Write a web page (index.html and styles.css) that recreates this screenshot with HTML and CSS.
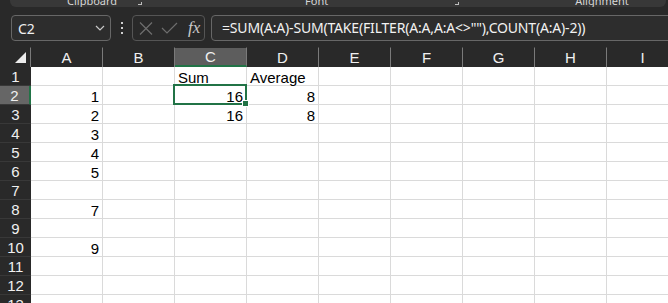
FILE: index.html
```html
<!DOCTYPE html>
<html lang="en">
<head>
  <meta charset="UTF-8">
  <meta name="viewport" content="width=device-width, initial-scale=1.0">
  <title>Sheet1 - Excel</title>
  <link rel="stylesheet" href="styles.css">
</head>
<body>
  <!-- bottom edge of the ribbon, group names cut off -->
  <div class="ribbon">
    <span class="group-label clipboard">Clipboard</span>
    <span class="launcher l1"></span>
    <span class="group-label font">Font</span>
    <span class="launcher l2"></span>
    <span class="group-label alignment">Alignment</span>
  </div>

  <div class="formula-row">
    <div class="name-box">
      <span>C2</span>
      <svg class="chevron" width="10" height="6" viewBox="0 0 10 6"><path d="M1 1l4 4 4-4" fill="none" stroke="#c8c8c8" stroke-width="1.2"/></svg>
    </div>
    <div class="grip"><i></i><i></i><i></i></div>
    <div class="fx-box">
      <svg width="14" height="13" viewBox="0 0 14 13"><path d="M1 0.5l12 12M13 0.5l-12 12" stroke="#6e6e6e" stroke-width="1.2"/></svg>
      <svg width="17" height="12" viewBox="0 0 17 12"><path d="M1 6l5 5L16 1" fill="none" stroke="#6e6e6e" stroke-width="1.2"/></svg>
      <span class="fx">fx</span>
    </div>
    <div class="formula-input">=SUM(A:A)-SUM(TAKE(FILTER(A:A,A:A&lt;&gt;""),COUNT(A:A)-2))</div>
  </div>

  <div class="sheet">
    <div class="h corner"><span class="tri"></span></div><div class="h">A</div><div class="h">B</div><div class="h sel">C</div><div class="h">D</div><div class="h">E</div><div class="h">F</div><div class="h">G</div><div class="h">H</div><div class="h">I</div>

    <div class="r">1</div><div class="c"></div><div class="c"></div><div class="c">Sum</div><div class="c">Average</div><div class="c"></div><div class="c"></div><div class="c"></div><div class="c"></div><div class="c"></div>
    <div class="r sel">2</div><div class="c n">1</div><div class="c"></div><div class="c n active">16</div><div class="c n">8</div><div class="c"></div><div class="c"></div><div class="c"></div><div class="c"></div><div class="c"></div>
    <div class="r">3</div><div class="c n">2</div><div class="c"></div><div class="c n">16</div><div class="c n">8</div><div class="c"></div><div class="c"></div><div class="c"></div><div class="c"></div><div class="c"></div>
    <div class="r">4</div><div class="c n">3</div><div class="c"></div><div class="c"></div><div class="c"></div><div class="c"></div><div class="c"></div><div class="c"></div><div class="c"></div><div class="c"></div>
    <div class="r">5</div><div class="c n">4</div><div class="c"></div><div class="c"></div><div class="c"></div><div class="c"></div><div class="c"></div><div class="c"></div><div class="c"></div><div class="c"></div>
    <div class="r">6</div><div class="c n">5</div><div class="c"></div><div class="c"></div><div class="c"></div><div class="c"></div><div class="c"></div><div class="c"></div><div class="c"></div><div class="c"></div>
    <div class="r">7</div><div class="c"></div><div class="c"></div><div class="c"></div><div class="c"></div><div class="c"></div><div class="c"></div><div class="c"></div><div class="c"></div><div class="c"></div>
    <div class="r">8</div><div class="c n">7</div><div class="c"></div><div class="c"></div><div class="c"></div><div class="c"></div><div class="c"></div><div class="c"></div><div class="c"></div><div class="c"></div>
    <div class="r">9</div><div class="c"></div><div class="c"></div><div class="c"></div><div class="c"></div><div class="c"></div><div class="c"></div><div class="c"></div><div class="c"></div><div class="c"></div>
    <div class="r">10</div><div class="c n">9</div><div class="c"></div><div class="c"></div><div class="c"></div><div class="c"></div><div class="c"></div><div class="c"></div><div class="c"></div><div class="c"></div>
    <div class="r">11</div><div class="c"></div><div class="c"></div><div class="c"></div><div class="c"></div><div class="c"></div><div class="c"></div><div class="c"></div><div class="c"></div><div class="c"></div>
    <div class="r">12</div><div class="c"></div><div class="c"></div><div class="c"></div><div class="c"></div><div class="c"></div><div class="c"></div><div class="c"></div><div class="c"></div><div class="c"></div>
    <div class="r">13</div><div class="c"></div><div class="c"></div><div class="c"></div><div class="c"></div><div class="c"></div><div class="c"></div><div class="c"></div><div class="c"></div><div class="c"></div>
  </div>
</body>
</html>
```

FILE: styles.css
```css
body {
  margin: 0;
  background-color: #292929;
  font-family: "Liberation Sans", Arial, sans-serif;
  overflow: hidden;
  height: 303px;
}

.ribbon {
  margin-left: 10px;
  margin-right: 2px;
  height: 7px;
  background-color: #383838;
  border-radius: 0 0 6px 6px;
  display: flex;
  align-items: flex-end;
  overflow: hidden;
}

.group-label {
  font-family: "Noto Sans", sans-serif;
  font-size: 11px;
  line-height: 11px;
  color: #d6d6d6;
  margin-bottom: 1px;
}

.clipboard { margin-left: 57px; }
.font { margin-left: 163px; }
.alignment { margin-left: 116px; }

.launcher {
  width: 4px;
  height: 3px;
  margin-bottom: 2px;
  border-right: 1px solid #bdbdbd;
  border-bottom: 1px solid #bdbdbd;
  box-sizing: border-box;
}

.l1 { margin-left: 21px; }
.l2 { margin-left: 127px; }

.formula-row {
  display: flex;
  align-items: center;
  margin-top: 8px;
  height: 26px;
  padding-left: 11px;
}

.name-box {
  width: 100px;
  height: 26px;
  box-sizing: border-box;
  border: 1px solid #676767;
  border-radius: 4px;
  background-color: #2d2d2d;
  display: flex;
  align-items: center;
  justify-content: space-between;
  padding: 0 5px 0 6px;
  color: #f0f0f0;
  font-family: "Noto Sans", sans-serif;
  font-size: 14px;
}

.grip {
  width: 21px;
  display: flex;
  flex-direction: column;
  align-items: center;
  gap: 3px;
}

.grip i {
  width: 2px;
  height: 2px;
  background-color: #cfcfcf;
}

.fx-box {
  width: 73px;
  height: 26px;
  box-sizing: border-box;
  border: 1px solid #555;
  border-radius: 4px;
  display: flex;
  align-items: center;
  gap: 8px;
  padding-left: 6px;
}

.fx {
  font-family: "Liberation Serif", serif;
  font-style: italic;
  font-size: 17px;
  color: #c9c9c9;
  margin-left: 2px;
}

.formula-input {
  flex: 1;
  margin-left: 6px;
  margin-right: -10px;
  height: 26px;
  box-sizing: border-box;
  border: 1px solid #676767;
  border-radius: 4px;
  background-color: #2d2d2d;
  color: #f2f2f2;
  font-family: "Noto Sans", sans-serif;
  font-size: 14px;
  letter-spacing: -0.18px;
  line-height: 24px;
  padding-left: 10px;
  white-space: nowrap;
}

.sheet {
  margin-top: 6px;
  display: grid;
  grid-template-columns: 31px repeat(9, 72px);
  grid-template-rows: 20px;
  grid-auto-rows: 19px;
  background-color: #fff;
}

.h {
  background-color: #292929;
  color: #f0f0f0;
  font-size: 15px;
  text-align: center;
  line-height: 20px;
  box-sizing: border-box;
  border-right: 1px solid #7a7a7a;
  border-top: 1px solid #292929;
}

.h.sel {
  background-color: #5d5d5d;
  border-bottom: 2px solid #217346;
  line-height: 17px;
}

.corner {
  display: flex;
  justify-content: flex-end;
  align-items: flex-end;
  padding: 0 4px 4px 0;
}

.tri {
  width: 0;
  height: 0;
  border-left: 11px solid transparent;
  border-bottom: 11px solid #ececec;
}

.r {
  background-color: #292929;
  color: #f0f0f0;
  font-size: 15px;
  text-align: center;
  line-height: 19px;
  box-sizing: border-box;
  border-bottom: 1px solid #383838;
}

.r.sel {
  background-color: #666;
  border-right: 2px solid #217346;
}

.c {
  box-sizing: border-box;
  border-right: 1px solid #dadada;
  border-bottom: 1px solid #dadada;
  font-size: 15px;
  line-height: 15px;
  padding: 3px 2px 0 3px;
  color: #000;
  white-space: nowrap;
}

.c.n {
  text-align: right;
  padding-right: 3px;
}

.c.active {
  position: relative;
}

.c.active::after {
  content: "";
  position: absolute;
  top: -2px;
  left: -2px;
  right: -1px;
  bottom: -1px;
  border: 2px solid #217346;
}

.c.active::before {
  content: "";
  position: absolute;
  right: -3px;
  bottom: -3px;
  width: 5px;
  height: 5px;
  background-color: #217346;
  border: 1px solid #fff;
  z-index: 1;
}
```
